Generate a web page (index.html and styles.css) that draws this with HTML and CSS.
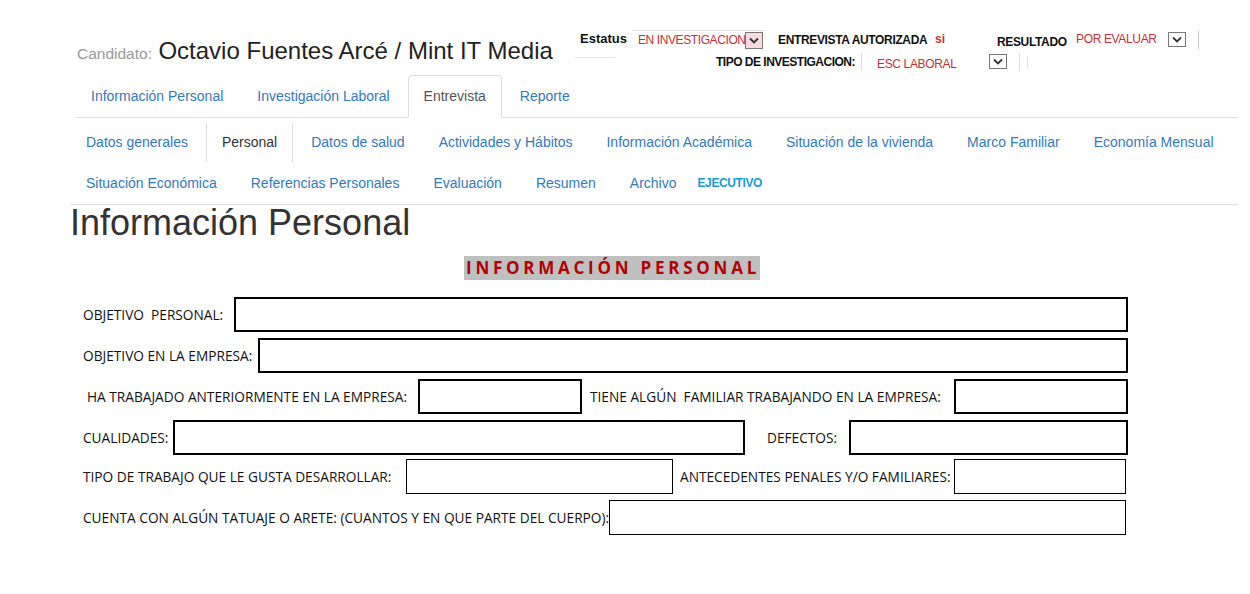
FILE: index.html
```html
<!DOCTYPE html>
<html lang="es">
<head>
<meta charset="utf-8">
<title>Entrevista - Personal</title>
<link rel="stylesheet" href="styles.css">
</head>
<body>
<header class="top">
  <div class="candidate">
    <span class="cand-label">Candidato:</span>
    <span class="cand-name">Octavio Fuentes Arcé / Mint IT Media</span>
  </div>
  <div class="controls">
    <div class="ctrl-row r1">
      <span class="lbl estatus">Estatus</span>
      <span class="sel sel-status"><span class="val red">EN INVESTIGACION</span><span class="arrow pink"><svg width="14" height="11" viewBox="0 0 14 11"><polyline points="3,3.5 7,7.5 11,3.5" fill="none" stroke="#333" stroke-width="1.8"/></svg></span></span>
      <span class="lbl cond autorizada">ENTREVISTA AUTORIZADA</span>
      <span class="red bold si">si</span>
      <span class="lbl cond resultado">RESULTADO</span>
      <span class="red cond evaluar">POR EVALUAR</span>
      <span class="arrow"><svg width="14" height="11" viewBox="0 0 14 11"><polyline points="3,3.5 7,7.5 11,3.5" fill="none" stroke="#333" stroke-width="1.8"/></svg></span>
      <span class="vline"></span>
    </div>
    <div class="ctrl-row r2">
      <span class="faint"></span>
      <span class="lbl cond tipo">TIPO DE INVESTIGACION:</span>
      <span class="vline v2"></span>
      <span class="red cond laboral">ESC LABORAL</span>
      <span class="arrow"><svg width="14" height="11" viewBox="0 0 14 11"><polyline points="3,3.5 7,7.5 11,3.5" fill="none" stroke="#333" stroke-width="1.8"/></svg></span>
      <span class="vline v3"></span>
      <span class="vline v4"></span>
    </div>
  </div>
</header>

<nav class="tabs">
  <a class="tab">Información Personal</a>
  <a class="tab">Investigación Laboral</a>
  <a class="tab active">Entrevista</a>
  <a class="tab">Reporte</a>
</nav>

<main class="content">
  <nav class="subnav">
    <div class="subrow first">
      <a class="sub">Datos generales</a>
      <a class="sub active">Personal</a>
      <a class="sub">Datos de salud</a>
      <a class="sub">Actividades y Hábitos</a>
      <a class="sub">Información Académica</a>
      <a class="sub">Situación de la vivienda</a>
      <a class="sub">Marco Familiar</a>
      <a class="sub">Economía Mensual</a>
    </div>
    <div class="subrow second">
      <a class="sub">Situación Económica</a>
      <a class="sub">Referencias Personales</a>
      <a class="sub">Evaluación</a>
      <a class="sub">Resumen</a>
      <a class="sub">Archivo</a>
      <a class="sub exec">EJECUTIVO</a>
    </div>
  </nav>

  <h1 class="page-title">Información Personal</h1>

  <section class="sheet">
    <div class="sheet-title-wrap"><span class="sheet-title">INFORMACIÓN PERSONAL</span></div>

    <div class="row row1">
      <span class="flabel">OBJETIVO&nbsp; PERSONAL:</span>
      <span class="box"></span>
    </div>
    <div class="row row2">
      <span class="flabel">OBJETIVO EN LA EMPRESA:</span>
      <span class="box"></span>
    </div>
    <div class="row row3">
      <span class="flabel ind">HA TRABAJADO ANTERIORMENTE EN LA EMPRESA:</span>
      <span class="box"></span>
      <span class="flabel pad8">TIENE ALGÚN&nbsp; FAMILIAR TRABAJANDO EN LA EMPRESA:</span>
      <span class="box"></span>
    </div>
    <div class="row row4">
      <span class="flabel">CUALIDADES:</span>
      <span class="box"></span>
      <span class="flabel pad22">DEFECTOS:</span>
      <span class="box"></span>
    </div>
    <div class="row row5">
      <span class="flabel">TIPO DE TRABAJO QUE LE GUSTA DESARROLLAR:</span>
      <span class="box thin"></span>
      <span class="flabel pad7">ANTECEDENTES PENALES Y/O FAMILIARES:</span>
      <span class="box thin"></span>
    </div>
    <div class="row row6">
      <span class="flabel">CUENTA CON ALGÚN TATUAJE O ARETE: (CUANTOS Y EN QUE PARTE DEL CUERPO):</span>
      <span class="box thin"></span>
    </div>
  </section>
</main>
</body>
</html>
```

FILE: styles.css
```css
* { box-sizing: border-box; }
body {
  margin: 0;
  background: #fff;
  font-family: "Liberation Sans", Arial, sans-serif;
  color: #333;
  width: 1250px;
  height: 594px;
  overflow: hidden;
}

/* ---------- header ---------- */
.top {
  display: flex;
  height: 75px;
}
.candidate {
  width: 580px;
  padding-left: 77px;
  padding-top: 37px;
  white-space: nowrap;
}
.cand-label {
  font-size: 15.5px;
  color: #999;
}
.cand-name {
  font-size: 24px;
  color: #222;
  margin-left: 2px;
}
.controls {
  flex: 1;
  padding-top: 30px;
  font-size: 12px;
}
.ctrl-row {
  display: flex;
  align-items: center;
  height: 19px;
  white-space: nowrap;
}
.r2 { margin-top: 3px; margin-left: -5px; }
.faint {
  display: inline-block;
  width: 40px;
  height: 1px;
  background: #e6e6e6;
  margin-right: 101px;
  margin-top: -8px;
}
.lbl { font-weight: bold; color: #111; }
.cond { letter-spacing: -0.35px; }
.red { color: #c4303a; }
.bold { font-weight: bold; }
.estatus {
  width: 52px;
  font-size: 13px;
  letter-spacing: 0;
  margin-top: -2px;
}
.sel {
  display: flex;
  align-items: center;
}
.sel-status {
  width: 133px;
  height: 19px;
  border-top: 1px solid #e2e2e2;
  padding-left: 6px;
}
.sel-status .val {
  width: 107px;
  overflow: hidden;
  letter-spacing: -0.4px;
}
.arrow {
  display: inline-flex;
  align-items: center;
  justify-content: center;
  width: 18px;
  height: 15px;
  border: 1px solid #777;
  background: #fff;
}
.arrow.pink { background: #f5dcde; height: 17px; }
.autorizada { margin-left: 13px; width: 157px; }
.si { width: 62px; margin-top: -2px; }
.resultado { width: 79px; margin-top: 4px; }
.evaluar { width: 92px; margin-top: -2px; }
.vline {
  display: inline-block;
  width: 1px;
  height: 18px;
  background: #ccc;
  margin-left: 12px;
}
.tipo { width: 145px; letter-spacing: -0.5px; }
.laboral { margin-left: 15px; width: 112px; margin-top: 4px; }
.v2 { margin-left: 0; background: #ddd; }
.v3 { margin-left: 12px; background: #ddd; }
.v4 { margin-left: 7px; background: #e6e3c8; height: 12px; }

/* ---------- main tabs ---------- */
.tabs {
  display: flex;
  margin-left: 75px;
  width: 1163px;
  border-bottom: 1px solid #ddd;
  height: 43px;
}
.tab {
  display: block;
  padding: 10px 15px 11px;
  margin-right: 2px;
  font-size: 14px;
  line-height: 20px;
  color: #337ab7;
  border: 1px solid transparent;
  border-radius: 4px 4px 0 0;
}
.tab.active {
  color: #555;
  background: #fff;
  border-color: #ddd;
  border-bottom-color: #fff;
  height: 43px;
}

/* ---------- content ---------- */
.content {
  margin-left: 70px;
  width: 1168px;
}
.subnav {
  margin-top: 4px;
  border-bottom: 1px solid #ddd;
}
.subrow {
  display: flex;
  align-items: center;
  height: 41px;
}
.sub {
  display: block;
  padding: 9px 15px 10px;
  margin-right: 2px;
  font-size: 14px;
  line-height: 20px;
  color: #337ab7;
  border-left: 1px solid transparent;
  border-right: 1px solid transparent;
}
.sub.active {
  color: #333;
  border-left-color: #ddd;
  border-right-color: #ddd;
}
.sub.exec {
  padding-left: 2px;
  font-size: 12px;
  font-weight: bold;
  letter-spacing: -0.4px;
  color: #1b9ad6;
}
.page-title {
  margin: 0;
  font-size: 36px;
  line-height: 36px;
  font-weight: normal;
  color: #333;
}

/* ---------- pasted sheet ---------- */
.sheet {
  font-family: "Open Sans", "Liberation Sans", sans-serif;
  color: #111;
}
.sheet-title-wrap {
  margin-top: 15px;
  padding-left: 394px;
  height: 24px;
}
.sheet-title {
  display: inline-block;
  background: #c0c0c0;
  color: #b00000;
  font-weight: bold;
  font-size: 17px;
  line-height: 24px;
  letter-spacing: 3.75px;
  padding-left: 2px;
  margin-right: -4px;
}
.row {
  display: grid;
  align-items: center;
  margin-left: 13px;
  height: 35px;
}
.row1 { margin-top: 17px; grid-template-columns: 151px 894px; }
.row2 { margin-top: 6px; grid-template-columns: 175px 870px; }
.row3 { margin-top: 6px; grid-template-columns: 335px 164px 372px 174px; }
.row4 { margin-top: 6px; grid-template-columns: 90px 572px 104px 279px; }
.row5 { margin-top: 4px; grid-template-columns: 323px 267px 281px 172px; }
.row6 { margin-top: 6px; grid-template-columns: 526px 517px; }
.flabel {
  font-size: 13.7px;
  white-space: nowrap;
  color: #111;
}
.ind { padding-left: 4px; }
.pad8 { padding-left: 8px; }
.pad22 { padding-left: 22px; }
.pad7 { padding-left: 7px; }
.box {
  display: block;
  height: 35px;
  border: 2px solid #000;
}
.box.thin { border-width: 1.5px; }
```
